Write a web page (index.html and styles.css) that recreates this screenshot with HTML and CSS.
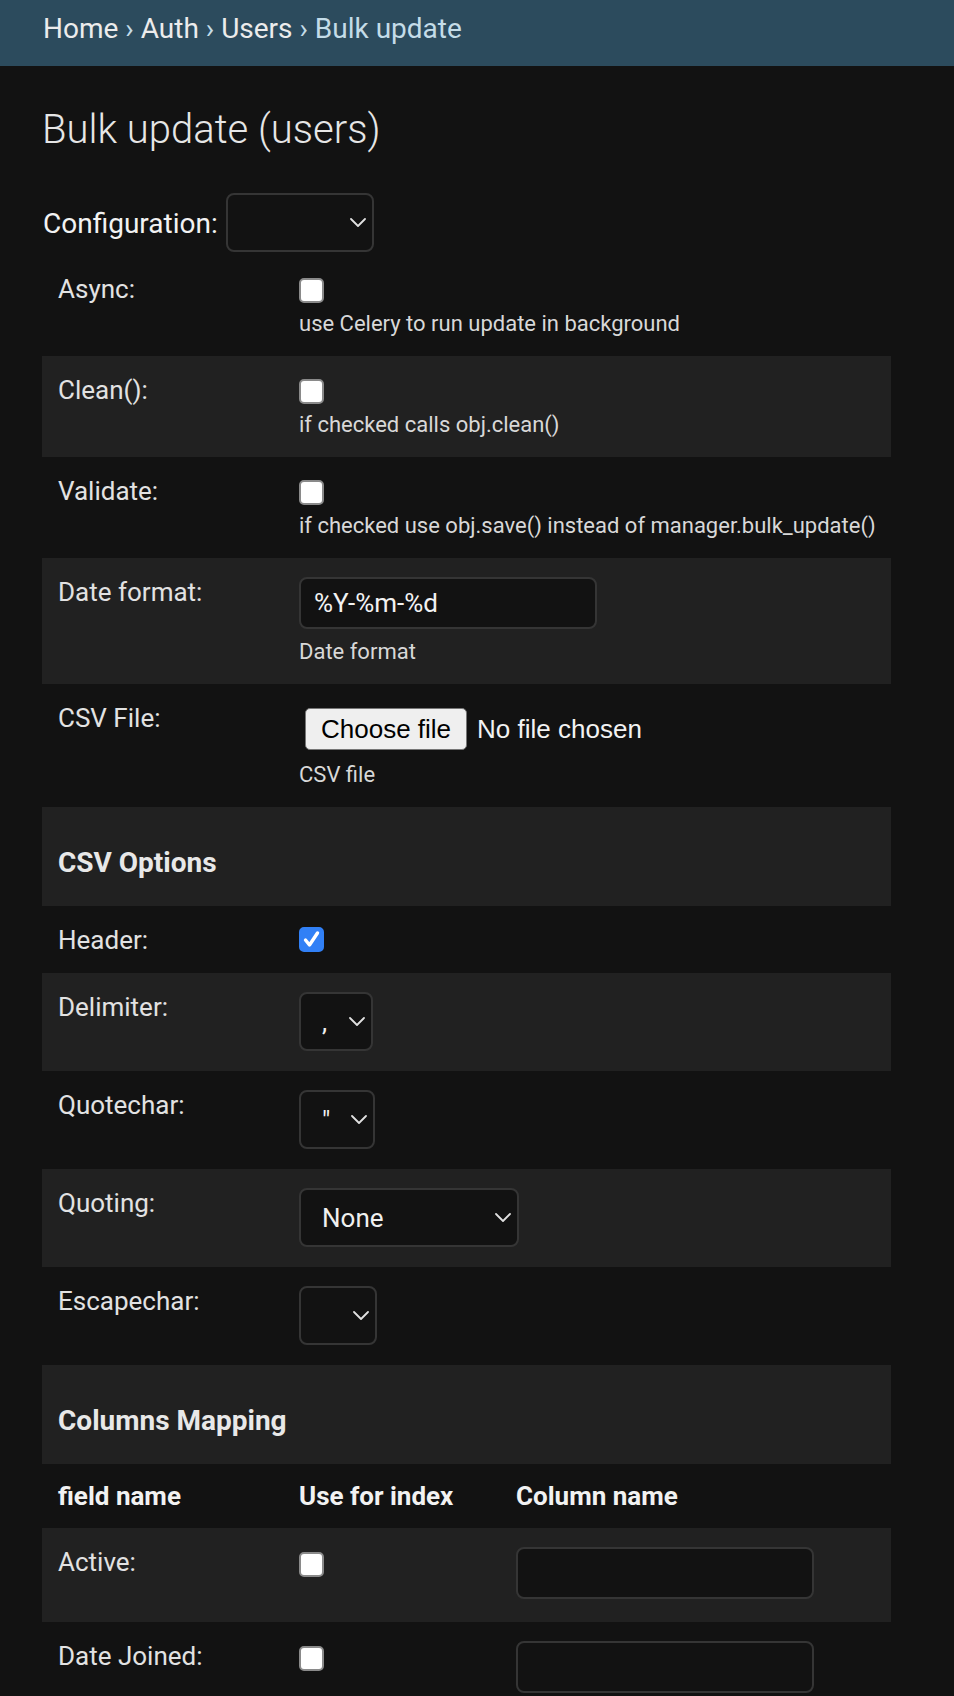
FILE: index.html
```html
<!DOCTYPE html>
<html lang="en">
<head>
<meta charset="utf-8">
<title>Bulk update (users)</title>
<link rel="stylesheet" href="styles.css">
</head>
<body>
<nav class="breadcrumbs"><a href="#">Home</a> › <a href="#">Auth</a> › <a href="#">Users</a> › Bulk update</nav>
<main class="content">
  <h1>Bulk update (users)</h1>
  <form class="form">
    <div class="config">
      <label class="config-label">Configuration:</label>
      <div class="select w-config">
        <select><option value=""></option></select>
        <svg class="chev" width="16" height="9" viewBox="0 0 16 9"><polyline points="1,1 8,8 15,1"/></svg>
      </div>
    </div>

    <div class="rows">
      <div class="row">
        <label class="lbl">Async:</label>
        <div class="field"><span class="cb"></span><div class="help">use Celery to run update in background</div></div>
      </div>
      <div class="row alt">
        <label class="lbl">Clean():</label>
        <div class="field"><span class="cb"></span><div class="help">if checked calls obj.clean()</div></div>
      </div>
      <div class="row">
        <label class="lbl">Validate:</label>
        <div class="field"><span class="cb"></span><div class="help">if checked use obj.save() instead of manager.bulk_update()</div></div>
      </div>
      <div class="row alt">
        <label class="lbl">Date format:</label>
        <div class="field"><input class="text-input" type="text" value="%Y-%m-%d"><div class="help">Date format</div></div>
      </div>
      <div class="row">
        <label class="lbl">CSV File:</label>
        <div class="field">
          <div class="file"><button type="button" class="file-btn">Choose file</button><span class="file-name">No file chosen</span></div>
          <div class="help help-file">CSV file</div>
        </div>
      </div>

      <div class="section alt"><h2>CSV Options</h2></div>

      <div class="row row-solo">
        <label class="lbl">Header:</label>
        <div class="field"><span class="cb cb-solo checked"><svg width="25" height="25" viewBox="0 0 25 25"><polyline points="6.5,13 10.5,18 18.5,6"/></svg></span></div>
      </div>
      <div class="row alt">
        <label class="lbl">Delimiter:</label>
        <div class="field"><div class="select w-delim"><select><option>,</option></select><svg class="chev" width="16" height="9" viewBox="0 0 16 9"><polyline points="1,1 8,8 15,1"/></svg></div></div>
      </div>
      <div class="row">
        <label class="lbl">Quotechar:</label>
        <div class="field"><div class="select w-quote"><select><option>"</option></select><svg class="chev" width="16" height="9" viewBox="0 0 16 9"><polyline points="1,1 8,8 15,1"/></svg></div></div>
      </div>
      <div class="row alt">
        <label class="lbl">Quoting:</label>
        <div class="field"><div class="select w-quoting"><select><option>None</option></select><svg class="chev" width="16" height="9" viewBox="0 0 16 9"><polyline points="1,1 8,8 15,1"/></svg></div></div>
      </div>
      <div class="row">
        <label class="lbl">Escapechar:</label>
        <div class="field"><div class="select w-escape"><select><option value=""></option></select><svg class="chev" width="16" height="9" viewBox="0 0 16 9"><polyline points="1,1 8,8 15,1"/></svg></div></div>
      </div>

      <div class="section alt"><h2>Columns Mapping</h2></div>

      <div class="trow thead">
        <div class="th">field name</div>
        <div class="th">Use for index</div>
        <div class="th">Column name</div>
      </div>
      <div class="trow alt">
        <label class="lbl">Active:</label>
        <div><span class="cb cb-table"></span></div>
        <div><input class="text-input" type="text" value=""></div>
      </div>
      <div class="trow">
        <label class="lbl">Date Joined:</label>
        <div><span class="cb cb-table"></span></div>
        <div><input class="text-input" type="text" value=""></div>
      </div>
    </div>
  </form>
</main>
</body>
</html>
```
FILE: styles.css
```css
* { box-sizing: border-box; }

body {
  margin: 0;
  background: #121212;
  color: #eeeeee;
  font-family: Roboto, "Liberation Sans", sans-serif;
}

.breadcrumbs {
  background: #2c4b5d;
  color: #c4dce8;
  font-size: 28px;
  line-height: 34px;
  padding: 12px 43px 20px;
}
.breadcrumbs a {
  color: #ececec;
  text-decoration: none;
}

.content {
  padding: 40px 63px 0 42px;
}

h1 {
  margin: 0;
  font-size: 40px;
  line-height: 47px;
  font-weight: 300;
  color: #e6e6e6;
}

.config {
  display: flex;
  align-items: center;
  gap: 8px;
  margin-top: 40px;
}
.config-label {
  font-size: 28px;
  line-height: 34px;
  color: #f2f2f2;
  padding-left: 1px;
}

.rows {
  margin-top: 1px;
}

.row {
  display: grid;
  grid-template-columns: 241px 1fr;
  padding: 19px 16px 18px;
}
.alt {
  background: #212121;
}

.lbl {
  font-size: 26px;
  line-height: 30px;
  color: #e2e2e2;
  white-space: nowrap;
}

.field {
  display: flex;
  flex-direction: column;
  align-items: flex-start;
  min-width: 0;
}

.cb {
  display: block;
  width: 25px;
  height: 25px;
  margin-top: 4px;
  background: #ffffff;
  border: 2px solid #8a8a8a;
  border-radius: 5px;
}
.cb-solo {
  margin-top: 2px;
}
.cb-table {
  margin-top: 5px;
}
.cb.checked {
  background: #3180f6;
  border-color: #3180f6;
}
.cb.checked svg {
  display: block;
  margin: -2px;
}
.cb.checked polyline {
  fill: none;
  stroke: #ffffff;
  stroke-width: 3.4;
  stroke-linecap: round;
  stroke-linejoin: round;
}

.help {
  font-size: 22px;
  line-height: 28px;
  margin-top: 7px;
  color: #d8d8d8;
  white-space: nowrap;
}
.help-file {
  margin-top: 11px;
}

.text-input {
  display: block;
  width: 298px;
  height: 52px;
  margin: 0 0 2px;
  padding: 0 13px;
  background: #121212;
  border: 2px solid #353535;
  border-radius: 8px;
  color: #f2f2f2;
  font-family: Roboto, "Liberation Sans", sans-serif;
  font-size: 26px;
  outline: none;
}

.file {
  display: flex;
  align-items: center;
  margin-top: 5px;
}
.file-btn {
  height: 42px;
  margin-left: 6px;
  padding: 0 15px;
  background: #efefef;
  border: 1px solid #767676;
  border-radius: 5px;
  color: #000000;
  font-family: "Liberation Sans", Arial, sans-serif;
  font-size: 26px;
}
.file-name {
  margin-left: 10px;
  font-family: "Liberation Sans", Arial, sans-serif;
  font-size: 26px;
  color: #f2f2f2;
}

.select {
  display: flex;
  align-items: center;
  height: 59px;
  margin-bottom: 2px;
  padding: 0 6px 0 21px;
  background: #121212;
  border: 2px solid #353535;
  border-radius: 8px;
}
.select select {
  flex: 1;
  min-width: 0;
  -webkit-appearance: none;
  appearance: none;
  background: transparent;
  border: 0;
  padding: 0;
  margin: 0;
  color: #f0f0f0;
  font-family: Roboto, "Liberation Sans", sans-serif;
  font-size: 26px;
  outline: none;
}
.chev {
  flex: none;
  display: block;
}
.chev polyline {
  fill: none;
  stroke: #e0e0e0;
  stroke-width: 1.8;
  stroke-linecap: round;
  stroke-linejoin: round;
}
.w-config { width: 148px; }
.w-delim { width: 74px; }
.w-quote { width: 76px; }
.w-quoting { width: 220px; }
.w-escape { width: 78px; }

.section {
  padding: 39px 16px 26px;
}
.section h2 {
  margin: 0;
  font-size: 28px;
  line-height: 34px;
  font-weight: 700;
  color: #e8e8e8;
}

.trow {
  display: grid;
  grid-template-columns: 241px 217px 1fr;
  padding: 19px 16px 21px;
}
.thead {
  padding: 16px 16px 16px;
}
.th {
  font-size: 26px;
  line-height: 32px;
  font-weight: 700;
  color: #f2f2f2;
}
```
